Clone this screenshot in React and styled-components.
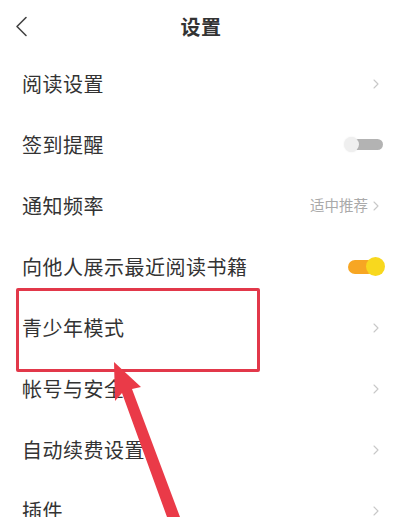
import styled, { createGlobalStyle } from 'styled-components';

const GlobalStyle = createGlobalStyle`
  html, body {
    margin: 0;
    padding: 0;
    background: #fff;
  }
  body {
    font-family: "Noto Sans CJK SC", "Noto Sans", sans-serif;
    color: #333;
  }
`;

const items = [
  { label: '阅读设置', kind: 'link' },
  { label: '签到提醒', kind: 'off' },
  { label: '通知频率', kind: 'link', value: '适中推荐' },
  { label: '向他人展示最近阅读书籍', kind: 'on' },
  { label: '青少年模式', kind: 'link' },
  { label: '帐号与安全', kind: 'link' },
  { label: '自动续费设置', kind: 'link' },
  { label: '插件', kind: 'link' },
];

const Chevron = ({ color = '#c8c8c8', size = 10 }) => (
  <svg width={size * 0.6} height={size} viewBox="0 0 6 10" fill="none">
    <path d="M1 1l4 4-4 4" stroke={color} strokeWidth="1.1" strokeLinecap="round" strokeLinejoin="round" />
  </svg>
);

const App = () => {
  return (
    <Page>
      <GlobalStyle />
      <Header>
        <BackButton>
          <svg width="13" height="21" viewBox="0 0 13 21" fill="none">
            <path d="M11 1.5L2 10.5l9 9" stroke="#444" strokeWidth="1.6" strokeLinecap="round" strokeLinejoin="round" />
          </svg>
        </BackButton>
        <Title>设置</Title>
      </Header>
      <List>
        {items.map((item) => (
          <Row key={item.label}>
            <Label>{item.label}</Label>
            <Trailing>
              {item.value && <Value>{item.value}</Value>}
              {item.kind === 'link' && <Chevron />}
              {item.kind === 'off' && (
                <Toggle>
                  <Track $on={false} />
                  <Knob $on={false} />
                </Toggle>
              )}
              {item.kind === 'on' && (
                <Toggle>
                  <Track $on />
                  <Knob $on />
                </Toggle>
              )}
            </Trailing>
          </Row>
        ))}
      </List>

      {/* annotation overlay */}
      <Highlight />
      <Arrow width="406" height="517" viewBox="0 0 406 517">
        <polygon
          points="114,362 141,387 132,389 180,517 167,517 122,393 115,401"
          fill="#ea3a48"
        />
      </Arrow>
    </Page>
  );
};

export default App;

const Page = styled.div`
  position: relative;
  width: 406px;
  height: 517px;
  overflow: hidden;
  background: #fff;
`;

const Header = styled.header`
  position: relative;
  height: 53px;
  display: flex;
  align-items: center;
  justify-content: center;
`;

const BackButton = styled.div`
  position: absolute;
  left: 15px;
  top: 16px;
  display: flex;
`;

const Title = styled.h1`
  margin: 0 4px 0 0;
  font-size: 20px;
  font-weight: 700;
  color: #333;
  letter-spacing: 0.5px;
`;

const List = styled.div`
  display: flex;
  flex-direction: column;
`;

const Row = styled.div`
  height: 61px;
  display: flex;
  align-items: center;
  justify-content: space-between;
  padding: 0 27px 0 22px;
`;

const Label = styled.span`
  font-size: 20px;
  color: #333;
  line-height: 1;
  letter-spacing: 0.5px;
`;

const Trailing = styled.div`
  display: flex;
  align-items: center;
  gap: 5px;
`;

const Value = styled.span`
  font-size: 14.5px;
  color: #aaa;
  line-height: 1;
`;

const Toggle = styled.div`
  position: relative;
  width: 41px;
  height: 19px;
  margin-right: -6px;
`;

const Track = styled.div`
  position: absolute;
  top: ${(p) => (p.$on ? '3px' : '4px')};
  left: ${(p) => (p.$on ? '4px' : '8px')};
  right: ${(p) => (p.$on ? '10px' : '2px')};
  height: ${(p) => (p.$on ? '14px' : '11px')};
  border-radius: 8px;
  background: ${(p) => (p.$on ? '#f7a623' : '#b3b3b3')};
`;

const Knob = styled.div`
  position: absolute;
  top: ${(p) => (p.$on ? '0' : '2px')};
  ${(p) => (p.$on ? 'right: 0;' : 'left: 0;')}
  width: ${(p) => (p.$on ? '19px' : '15px')};
  height: ${(p) => (p.$on ? '19px' : '15px')};
  border-radius: 50%;
  background: ${(p) => (p.$on ? '#f8d81e' : '#efefef')};
  box-shadow: ${(p) => (p.$on ? 'none' : '0 0 2px rgba(0,0,0,0.08)')};
`;

const Highlight = styled.div`
  position: absolute;
  left: 16px;
  top: 288px;
  width: 238px;
  height: 78px;
  border: 3px solid #e2384a;
  border-radius: 2px;
  pointer-events: none;
`;

const Arrow = styled.svg`
  position: absolute;
  left: 0;
  top: 0;
  pointer-events: none;
`;
